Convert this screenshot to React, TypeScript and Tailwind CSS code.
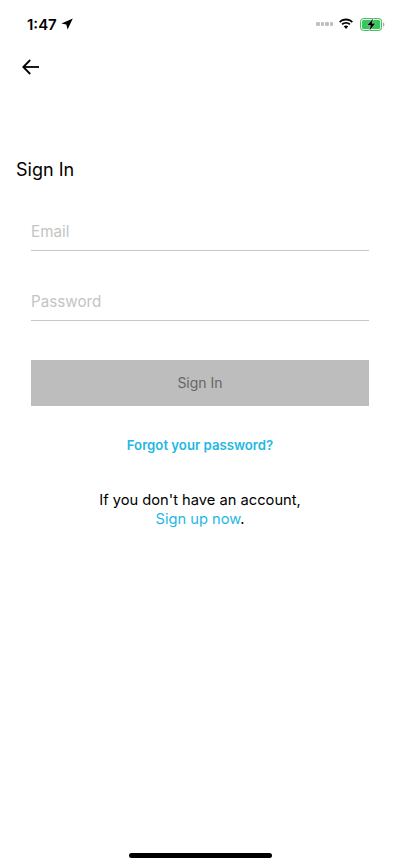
export default function App() {
  return (
    <div className="h-[866px] w-[400px] overflow-hidden bg-white flex flex-col font-['Inter','Liberation_Sans',sans-serif] text-black">
      {/* status bar */}
      <div className="h-[48px] pl-[27px] pr-[15px] flex items-center justify-between">
        <div className="flex items-center gap-[4px]">
          <span className="text-[15px] font-semibold leading-none">1:47</span>
          <svg width="12" height="12" viewBox="0 0 12 12">
            <path d="M11.8 0.4 L0.4 5.400 L5.300 6.400 L6.600 11.600 Z" fill="#000" />
          </svg>
        </div>
        <div className="flex items-center">
          <div className="flex gap-[1px] mr-[5px]">
            <span className="w-[3.500px] h-[4px] rounded-[1px] bg-[#c0c0c0]" />
            <span className="w-[3.500px] h-[4px] rounded-[1px] bg-[#c0c0c0]" />
            <span className="w-[3.500px] h-[4px] rounded-[1px] bg-[#c0c0c0]" />
            <span className="w-[3.500px] h-[4px] rounded-[1px] bg-[#c0c0c0]" />
          </div>
          <svg width="16" height="12" viewBox="0 0 16 12" className="mr-[6px]">
            <path d="M8 2.4c2.2 0 4.2.9 5.7 2.3l1.2-1.3C13.100 1.700 10.700.6 8 .6S2.900 1.700 1.100 3.400l1.200 1.300C3.800 3.300 5.800 2.400 8 2.400z" fill="#000" />
            <path d="M8 5.800c1.300 0 2.400.5 3.300 1.300l1.200-1.300C11.300 4.700 9.700 4 8 4s-3.300.7-4.500 1.800l1.200 1.300C5.600 6.300 6.700 5.800 8 5.800z" fill="#000" />
            <path d="M8 7.500c-.9 0-1.600.3-2.200.8L8 11l2.200-2.700c-.6-.5-1.300-.8-2.200-.8z" fill="#000" />
          </svg>
          <svg width="25" height="13" viewBox="0 0 25 13">
            <rect x="0.600" y="0.600" width="21" height="11.800" rx="2.800" fill="none" stroke="#35b555" strokeWidth="1" />
            <rect x="2" y="2" width="18.200" height="9" rx="1.500" fill="#34c759" />
            <path d="M23 4.500c.9.300 1.400 1 1.400 2s-.5 1.700-1.400 2z" fill="#a8a8a8" />
            <path d="M13.400 0 L6.800 7.500 H10.400 L9.200 13 L15.800 5.300 H12.100 Z" fill="#000" stroke="#fff" strokeWidth="0.400" />
          </svg>
        </div>
      </div>

      {/* back */}
      <div className="h-[38px] pl-[22px] flex items-center">
        <svg width="18" height="16" viewBox="0 0 18 16" fill="none" stroke="#000" strokeWidth="1.800">
          <path d="M17 8H1.500" />
          <path d="M8.200 1 L1.300 8 L8.200 15" />
        </svg>
      </div>

      <div className="mt-[70px] pl-[16px] text-[18px] leading-[28px]">Sign In</div>

      {/* form */}
      <div className="mt-[18px] px-[31px] flex flex-col">
        <div className="h-[49px] border-b border-[#c8c8c8] flex items-center pt-[13px] text-[15.200px] text-[#c4c4c4]">Email</div>
        <div className="mt-[21px] h-[49px] border-b border-[#c8c8c8] flex items-center pt-[13px] text-[15.200px] text-[#c4c4c4]">Password</div>
        <button type="button" className="mt-[39px] h-[46px] pb-[2px] bg-[#bdbdbd] text-[14px] text-[#666666]">Sign In</button>
      </div>

      <div className="mt-[30px] text-center text-[13.200px] leading-[18px] font-semibold text-[#1fb8e4]">Forgot your password?</div>

      <div className="mt-[37px] text-center text-[14.700px] leading-[19px]">
        <div>If you don't have an account,</div>
        <div><span className="text-[#1fb8e4]">Sign up now</span>.</div>
      </div>

      {/* home indicator */}
      <div className="mt-auto mb-[8px] self-center w-[143px] h-[5px] rounded-full bg-black" />
    </div>
  );
}
